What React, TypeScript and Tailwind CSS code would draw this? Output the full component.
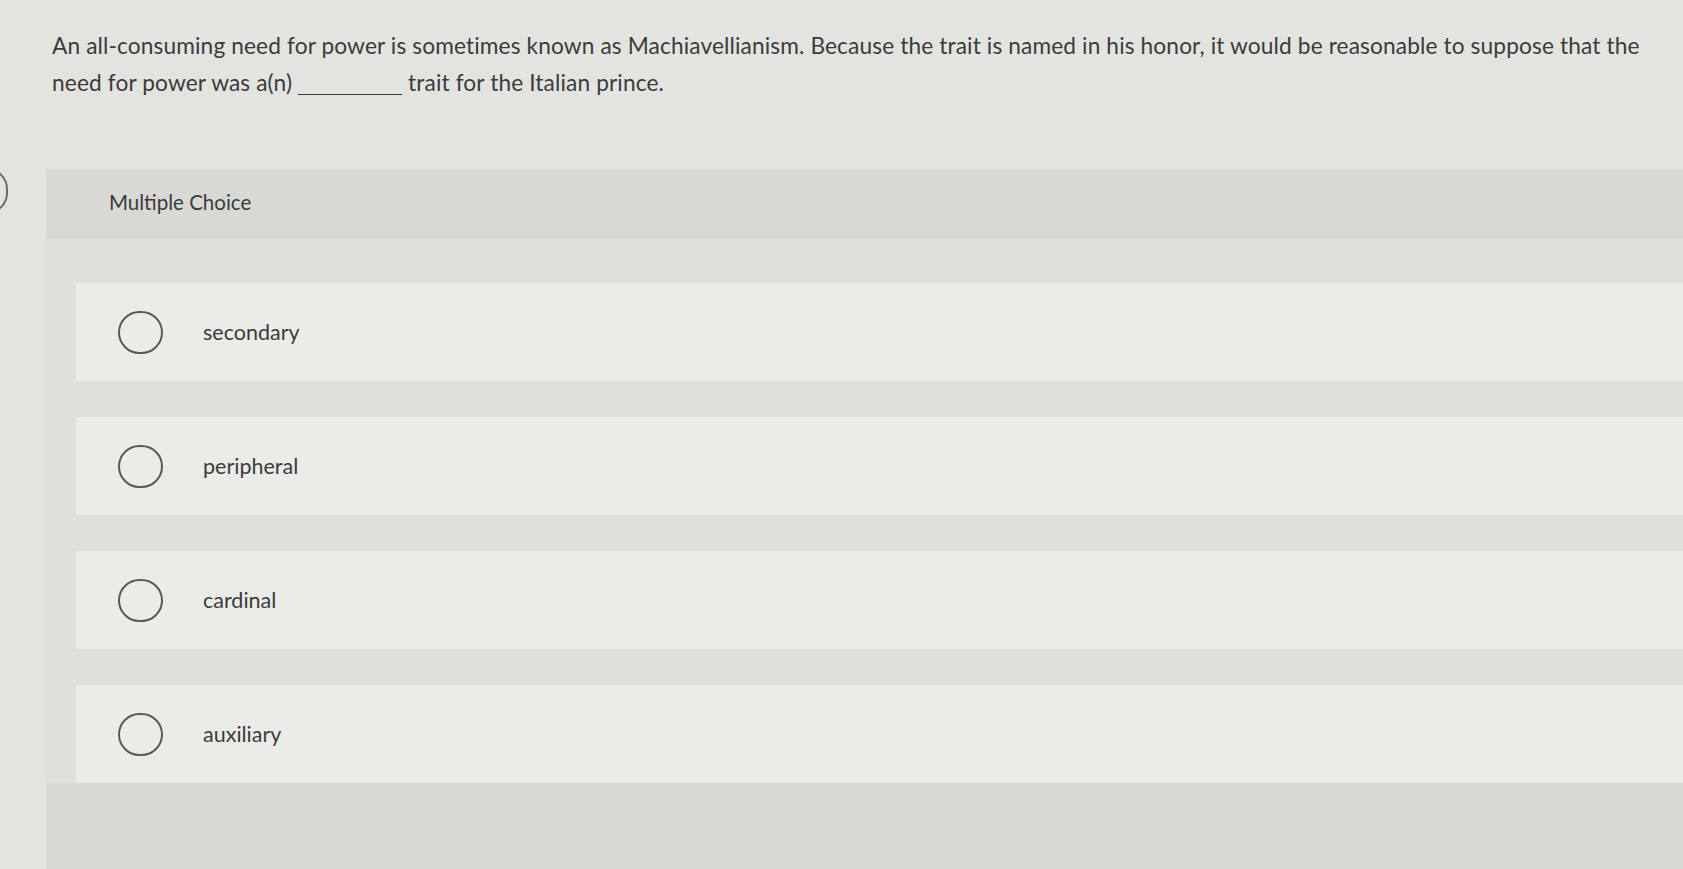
import React from "react"

const options = ["secondary", "peripheral", "cardinal", "auxiliary"]

function Radio() {
  return (
    <span className="inline-block h-[43px] w-[45px] shrink-0 rounded-full border-2 border-[#5a5a5c] bg-transparent" />
  )
}

export default function App() {
  return (
    <div
      className="relative h-[869px] w-full overflow-hidden bg-[#e3e4e0] text-[#3b3b3d]"
      style={{ fontFamily: "Lato, 'Open Sans', sans-serif" }}
    >
      {/* edge of a control peeking in from the left */}
      <div className="absolute left-[-34px] top-[168px] h-[46px] w-[42px] rounded-full border-2 border-[#6a6a6a]" />

      <div className="pl-[52px] pr-[10px] pt-[27px]">
        <p className="text-[22.7px] leading-[37px] tracking-[0.12px]">
          An all-consuming need for power is sometimes known as Machiavellianism. Because the trait is named in his
          honor, it would be reasonable to suppose that the
          <br />
          need for power was a(n){" "}
          <span className="inline-block w-[104px] translate-y-[4px] border-b border-[#3b3b3d]" /> trait for the Italian
          prince.
        </p>
      </div>

      <section className="ml-[46px] mt-[68px] flex h-full flex-col bg-[#d8d9d5]">
        <div className="h-[70px] pl-[63px] pt-[18px] text-[20.5px]">Multiple Choice</div>

        <div className="flex flex-col gap-[36px] bg-[#dfe0dc] pl-[30px] pt-[44px]">
          {options.map((label) => (
            <label
              key={label}
              className="flex h-[98px] cursor-pointer items-center gap-[40px] bg-[#ebebe8] pl-[42px]"
            >
              <Radio />
              <span className="text-[21.5px]">{label}</span>
            </label>
          ))}
        </div>
      </section>
    </div>
  )
}
